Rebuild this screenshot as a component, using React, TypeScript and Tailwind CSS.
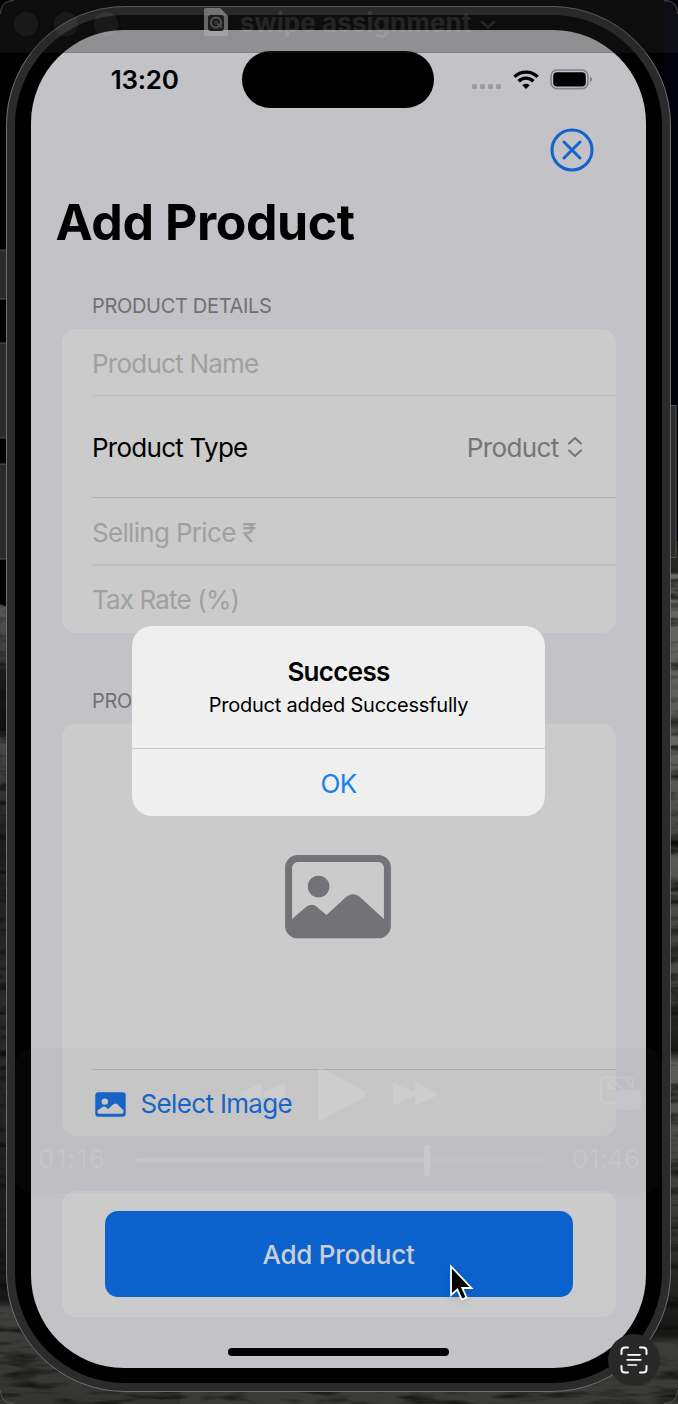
import type { ReactNode } from 'react';

function StatusBar() {
  return (
    <div className="flex h-[78px] pt-[21px]">
      <div className="flex w-[211.5px] justify-end pr-[63.5px]">
        <span className="h-[57px] text-[26px] leading-[57px] font-semibold tracking-[-0.3px] whitespace-nowrap text-black">13:20</span>
      </div>
      <div className="h-[57px] w-[192px] rounded-full bg-black" />
      <div className="flex h-[57px] pl-[37.5px]">
        <div className="flex gap-[3px] pt-[33px]">
          {[0, 1, 2, 3].map((n) => (
            <span key={n} className="size-[5px] rounded-[1.5px] bg-[#9b9a9e]" />
          ))}
        </div>
        <svg className="mt-[19px] ml-[12px]" width="26" height="20" viewBox="0 0 26 20">
          <g fill="none" stroke="#000" strokeWidth="3.4">
            <path d="M1.4 6.9C7.8 .5 18.2 .5 24.6 6.9" />
            <path d="M5.6 11.2C9.7 7.1 16.3 7.1 20.4 11.2" />
          </g>
          <path d="M13 19.1 9.3 15.3C11.3 13.3 14.7 13.3 16.7 15.3Z" />
        </svg>
        <svg className="mt-[18px] ml-[11px]" width="43" height="21" viewBox="0 0 43 21">
          <rect x="1" y="1" width="37" height="18.6" rx="6" fill="none" stroke="#828186" strokeWidth="1.6" />
          <rect x="3.2" y="3.2" width="32.6" height="14.2" rx="4" />
          <path d="M40 7.3q2 .8 2 3t-2 3z" fill="#828186" />
        </svg>
      </div>
    </div>
  );
}

function SectionLabel({ children }: { children: ReactNode }) {
  return <h2 className="pt-[2px] pl-[61.5px] text-[20px] leading-[22px] tracking-[-0.32px] text-[#717075]">{children}</h2>;
}

function Card({ children, className }: { children: ReactNode; className: string }) {
  return <div className={`ml-[31px] w-[554px] rounded-[14px] bg-[#cbcbcb] ${className}`}>{children}</div>;
}

function Photo() {
  return (
    <svg width="106" height="84" viewBox="0 0 106 84">
      <rect x="3.6" y="3.6" width="98.8" height="76.2" rx="9" fill="none" stroke="#737277" strokeWidth="7" />
      <circle cx="33.6" cy="31.5" r="10.8" fill="#737277" />
      <path d="M6 65 21 52Q26.500 47.500 32 52L41.500 60 60 43Q68 35.500 76 43L100 65V80H6Z" fill="#737277" />
    </svg>
  );
}

function Form() {
  return (
    <div>
      <SectionLabel>PRODUCT DETAILS</SectionLabel>
      <Card className="mt-[12px] h-[304px] pl-[30.5px] text-[26px] text-[#a0a0a1]">
        <div className="flex h-[67px] items-center border-b border-[#bebebe] pt-[2px] tracking-[-0.76px]">Product Name</div>
        <div className="flex h-[102px] items-center justify-between border-b border-[#b2b2b4] pt-[2px] pr-[33px]">
          <span className="tracking-[-0.74px] text-black">Product Type</span>
          <span className="flex items-center gap-[8px] tracking-[-0.65px] text-[#757579]">
            Product
            <svg className="-mt-[2px]" width="16" height="22" viewBox="0 0 16 22" fill="none" stroke="#757579" strokeWidth="2" strokeLinecap="round" strokeLinejoin="round">
              <path d="M2 7.500 8 2l6 5.500M2 14.500 8 20l6-5.500" />
            </svg>
          </span>
        </div>
        <div className="flex h-[68px] items-center border-b-2 border-[#bfbfc0] pt-[2px] tracking-[-0.68px]">Selling Price ₹</div>
        <div className="flex h-[67px] items-center tracking-[-0.85px]">Tax Rate (%)</div>
      </Card>
      <div className="mt-[55px]">
        <SectionLabel>PRO</SectionLabel>
      </div>
      <Card className="mt-[12px] h-[412px]">
        <div className="ml-[30.5px] flex h-[346px] items-center justify-center border-b border-[#b2b2b4] pr-[31.5px]">
          <Photo />
        </div>
        <div className="flex h-[66px] items-center pt-[2px] pl-[33px] text-[26px] tracking-[-0.65px] text-[#1263cb]">
          <svg width="31" height="25" viewBox="0 0 31 25">
            <rect x=".3" y=".3" width="30.400" height="24.400" rx="3" fill="#1263cb" />
            <circle cx="9.800" cy="9.600" r="3.200" fill="#cbcbcb" />
            <path d="M2.500 18.500 7.500 15q1.500-1 3 0l2.500 2 5.500-4.700q2-1.500 4 0l6 6V20q0 1.700-1.700 1.700H4.200Q2.500 21.700 2.500 20Z" fill="#cbcbcb" />
          </svg>
          <span className="-mt-px ml-[15px]">Select Image</span>
        </div>
      </Card>
      <Card className="mt-[55px] flex h-[126px] items-center justify-center">
        <button className="h-[86px] w-[468px] rounded-[13px] bg-[#0c62cd] text-[26px] font-medium tracking-[-0.25px] text-[#cbcfd5]">Add Product</button>
      </Card>
    </div>
  );
}

function Alert() {
  return (
    <div className="absolute top-[625.5px] left-[132px] flex h-[190px] w-[413px] flex-col rounded-[20px] bg-[#efeff0] text-center">
      <div className="h-[122px] pt-[30.5px]">
        <div className="text-[26px] leading-8 font-semibold tracking-[-0.7px] text-black">Success</div>
        <div className="mt-[4.5px] text-[20px] leading-6 tracking-[-0.22px] text-black">Product added Successfully</div>
      </div>
      <div className="flex grow items-center justify-center border-t border-[#c9c9cb] pt-[3px] text-[26px] tracking-[-0.7px] text-[#1780ef]">OK</div>
    </div>
  );
}

function TitleBar() {
  return (
    <div className="absolute inset-x-0 top-0 h-[53px] rounded-t-[12px] border-b border-black/10 bg-[#272727]/33">
      <div className="flex h-[48px] items-center pl-[14px] text-white/10">
        <div className="flex w-[190px] gap-[16px]">
          {[0, 1, 2].map((n) => (
            <span key={n} className="size-6 rounded-full bg-white/5" />
          ))}
        </div>
        <svg className="-mt-[4px]" width="24" height="28" viewBox="0 0 24 28">
          <path d="M2 0H16L24 8V26Q24 28 22 28H2Q0 28 0 26V2Q0 0 2 0Z" fill="#b0b0b0" fillOpacity=".55" />
          <path d="M16 0V8H24" fill="#999" fillOpacity=".15" />
          <rect x="4" y="7" width="16" height="16" rx="3" fill="#1c1c1c" />
          <circle cx="12" cy="14.500" r="5" fill="none" stroke="#555" strokeWidth="2" />
          <path d="m12 14.500 6 5" stroke="#4c4c4c" strokeWidth="2" />
          <circle cx="12" cy="14.500" r="2" fill="#333" />
        </svg>
        <span className="-mt-[3px] ml-[12px] text-[26px] font-bold tracking-[0.05px]">swipe assignment</span>
        <svg className="ml-[9px]" width="16" height="9" viewBox="0 0 16 9" fill="none" stroke="currentColor" strokeWidth="2.500" strokeLinecap="round">
          <path d="m2 2 6 5 6-5" />
        </svg>
      </div>
    </div>
  );
}

function Player() {
  return (
    <div className="absolute top-[1048px] left-[15px] h-[145px] w-[647px] rounded-[18px] bg-[#717171]/5 text-white/12">
      <div className="flex h-[92px] items-center pl-[225px]">
        <svg width="45" height="26" viewBox="0 0 45 26" fill="currentColor">
          <path d="M20 2.500Q22 0 22 3V23Q22 26 20 24L2 15Q-1 13 2 11ZM43 2.500Q45 0 45 3V23Q45 26 43 24L24 15Q21 13 24 11Z" />
        </svg>
        <svg className="ml-[33px]" width="48" height="54" viewBox="0 0 48 54" fill="currentColor">
          <path d="M0 3Q0-1 4 1L46 24Q50 27 46 30L4 53Q0 55 0 51Z" />
        </svg>
        <svg className="ml-[27px]" width="45" height="26" viewBox="0 0 45 26" fill="currentColor">
          <path d="M2 2.500Q0 0 0 3V23Q0 26 2 24L22 14.500V24Q22 26 24 24L43 15Q46 13 43 11L24 2Q22 0 22 3V11.500Z" />
        </svg>
        <svg className="-mt-[2px] ml-[161px]" width="43" height="36" viewBox="0 0 43 36">
          <path d="M17 27.500H14L12 29 10 27.500H5Q2 27.500 2 24.500V5.500Q2 2.500 5 2.500H30Q34 2.500 34 6.500V14M12 4l12 10M26 4l8 9" fill="none" stroke="currentColor" strokeWidth="2" />
          <path d="M7 6 9 5.500 12 9V5.500L15.500 14.500 6.500 13.500 10 11Z" fill="currentColor" />
          <rect x="17" y="15" width="25" height="20" rx="4" fill="currentColor" />
        </svg>
      </div>
      <div className="flex h-[40px] items-center pl-[23px] text-[26px]">
        <span className="-mt-[3px] w-[98px] tracking-[1.4px]">01:16</span>
        <span className="h-[5px] w-[288px] rounded-l-full bg-white/10" />
        <span className="h-[31px] w-[6px] rounded-[2px] bg-white/15" />
        <span className="h-[5px] w-[115px] rounded-r-full bg-white/3" />
        <span className="-mt-[3px] ml-[27px] tracking-[0.2px]">01:46</span>
      </div>
    </div>
  );
}

function LiveTextBadge() {
  return (
    <div className="absolute top-[1334px] left-[608px] flex size-[52px] items-center justify-center rounded-full bg-[#282828]">
      <svg width="28" height="28" viewBox="0 0 28 28" fill="none" stroke="#fff" strokeWidth="2" strokeLinecap="round">
        <path d="M1.500 8V5q0-3.500 3.500-3.500h3M20 1.500h3q3.500 0 3.500 3.500v3M26.500 20v3q0 3.500-3.500 3.500h-3M8 26.500H5Q1.500 26.500 1.500 23v-3" />
        <path d="M8 8.800h12M7.200 13.800h13.600M8 19h8.500" strokeWidth="1.700" />
      </svg>
    </div>
  );
}

function Wallpaper() {
  return (
    <svg className="absolute inset-0" width="678" height="1404" viewBox="0 0 678 1404">
      <defs>
        <linearGradient id="stoneLeft" gradientUnits="userSpaceOnUse" x1="0" y1="600" x2="0" y2="1404">
          <stop offset="0" stopColor="#5a5a56" />
          <stop offset=".07" stopColor="#3c3c39" />
          <stop offset=".09" stopColor="#1b1b19" />
          <stop offset=".16" stopColor="#10100e" />
          <stop offset=".18" stopColor="#484845" />
          <stop offset=".3" stopColor="#1e1e1c" />
          <stop offset=".5" stopColor="#2b2b28" />
          <stop offset=".87" stopColor="#171715" />
          <stop offset=".882" stopColor="#40403e" />
          <stop offset="1" stopColor="#343431" />
        </linearGradient>
        <linearGradient id="stoneRight" gradientUnits="userSpaceOnUse" x1="0" y1="541" x2="0" y2="1404">
          <stop offset="0" stopColor="#1c1c18" />
          <stop offset=".035" stopColor="#2a2a26" />
          <stop offset=".04" stopColor="#676763" />
          <stop offset=".2" stopColor="#5c5c59" />
          <stop offset=".21" stopColor="#282825" />
          <stop offset=".225" stopColor="#666662" />
          <stop offset=".34" stopColor="#454542" />
          <stop offset=".35" stopColor="#181816" />
          <stop offset=".36" stopColor="#5c5c59" />
          <stop offset=".48" stopColor="#3c3c39" />
          <stop offset=".5" stopColor="#4c4c49" />
          <stop offset=".59" stopColor="#151513" />
          <stop offset=".605" stopColor="#5c5c59" />
          <stop offset=".77" stopColor="#3a3a38" />
          <stop offset=".92" stopColor="#161615" />
          <stop offset=".93" stopColor="#3c3c3a" />
          <stop offset="1" stopColor="#3a3a37" />
        </linearGradient>
        <filter id="grain" x="0" y="0" width="1" height="1">
          <feTurbulence type="fractalNoise" baseFrequency=".02 .12" numOctaves="3" seed="4" />
          <feColorMatrix values="0 0 0 0 0  0 0 0 0 0  0 0 0 0 0  1.800 0 0 0 -.85" />
        </filter>
      </defs>
      <path d="M664 0h14v541h-14z" fill="#02020c" />
      <path d="M0 604 20 612V1250L180 1380V1404H0Z" fill="url(#stoneLeft)" />
      <path d="M678 541H660V1250L520 1380H180V1404H678Z" fill="url(#stoneRight)" />
      <path d="M0 604 20 612V1250L180 1380H520L660 1250V541H678V1404H0Z" filter="url(#grain)" />
      <g fill="#2b2b2b" stroke="#555" strokeWidth="1">
        <rect x="-2" y="250" width="10" height="49" />
        <rect x="-2" y="343" width="10" height="95" />
        <rect x="-2" y="464" width="10" height="95" />
        <rect x="668" y="405.500" width="8" height="152" />
      </g>
      <path d="M.5 14Q.5 .5 14 .5M664 .5Q677.500 .5 677.500 14M.5 1390Q.5 1403.500 14 1403.500M664 1403.500Q677.500 1403.500 677.500 1390" fill="none" stroke="#555" />
    </svg>
  );
}

export default function App() {
  return (
    <div className="relative h-[1404px] w-[678px] overflow-hidden bg-black" style={{ fontFamily: 'Inter, "Noto Sans", sans-serif' }}>
      <Wallpaper />
      <div className="relative ml-[6px] pt-[6px]">
        <div className="h-[1386px] w-[665px] rounded-[119px] border-[1.5px] border-[#707070] bg-[#2b2b2b] p-[8px]">
          <div className="h-full w-full rounded-[110px] bg-black pt-[15px] pl-[15.5px]">
            <main className="h-[1338px] w-[615px] overflow-hidden rounded-[93px] bg-[#c3c2c7]">
              <StatusBar />
              <div className="flex h-[84px] justify-end pt-[20px] pr-[52px]">
                <svg width="44" height="44" viewBox="0 0 44 44" fill="none" stroke="#1263cb" strokeWidth="3" strokeLinecap="round">
                  <circle cx="22" cy="22" r="20" />
                  <path d="m14 14 16 16M30 14 14 30" />
                </svg>
              </div>
              <h1 className="-mt-px h-[102px] pl-[25px] text-[50px] leading-[62px] font-bold tracking-[-0.4px] text-black">Add Product</h1>
              <Form />
              <div className="mx-auto mt-[31px] h-[8px] w-[221px] rounded-full bg-black" />
            </main>
          </div>
        </div>
      </div>
      <TitleBar />
      <Player />
      <Alert />
      <svg className="absolute top-[1262px] left-[448px] drop-shadow-md" width="28" height="40" viewBox="0 0 28 40">
        <path d="M3 4.500V33L9.400 27.500 13.700 37.500 18.500 35.500 14.300 26H23.500Z" fill="#000" stroke="#fff" strokeWidth="1.800" />
      </svg>
      <LiveTextBadge />
    </div>
  );
}
